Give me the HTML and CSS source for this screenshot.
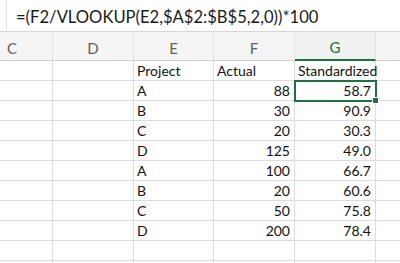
FILE: index.html
```html
<!DOCTYPE html>
<html>
<head>
<meta charset="utf-8">
<link rel="stylesheet" href="styles.css">
</head>
<body>
<div class="app">
  <div class="formula-bar">
    <div class="fx-sep"></div>
    <div class="formula">=(F2/VLOOKUP(E2,$A$2:$B$5,2,0))*100</div>
  </div>
  <div class="sheet">
    <div class="grid">
      <div class="hdr">C</div><div class="hdr">D</div><div class="hdr">E</div><div class="hdr">F</div><div class="hdr hdr-sel">G</div><div class="hdr"></div>

      <div class="cell"></div><div class="cell"></div><div class="cell">Project</div><div class="cell">Actual</div><div class="cell">Standardized</div><div class="cell"></div>

      <div class="cell"></div><div class="cell"></div><div class="cell">A</div><div class="cell num">88</div><div class="cell num active">58.7<span class="handle"></span></div><div class="cell"></div>

      <div class="cell"></div><div class="cell"></div><div class="cell">B</div><div class="cell num">30</div><div class="cell num">90.9</div><div class="cell"></div>

      <div class="cell"></div><div class="cell"></div><div class="cell">C</div><div class="cell num">20</div><div class="cell num">30.3</div><div class="cell"></div>

      <div class="cell"></div><div class="cell"></div><div class="cell">D</div><div class="cell num">125</div><div class="cell num">49.0</div><div class="cell"></div>

      <div class="cell"></div><div class="cell"></div><div class="cell">A</div><div class="cell num">100</div><div class="cell num">66.7</div><div class="cell"></div>

      <div class="cell"></div><div class="cell"></div><div class="cell">B</div><div class="cell num">20</div><div class="cell num">60.6</div><div class="cell"></div>

      <div class="cell"></div><div class="cell"></div><div class="cell">C</div><div class="cell num">50</div><div class="cell num">75.8</div><div class="cell"></div>

      <div class="cell"></div><div class="cell"></div><div class="cell">D</div><div class="cell num">200</div><div class="cell num">78.4</div><div class="cell"></div>

      <div class="cell"></div><div class="cell"></div><div class="cell"></div><div class="cell"></div><div class="cell"></div><div class="cell"></div>

      <div class="cell"></div><div class="cell"></div><div class="cell"></div><div class="cell"></div><div class="cell"></div><div class="cell"></div>
    </div>
  </div>
</div>
</body>
</html>
```

FILE: styles.css
```css
html, body {
  margin: 0;
  padding: 0;
  background: #ffffff;
}
body {
  width: 400px;
  height: 263px;
  overflow: hidden;
  font-family: Lato, "Open Sans", sans-serif;
  color: #111;
}
.app {
  display: flex;
  flex-direction: column;
  height: 263px;
  overflow: hidden;
}
.formula-bar {
  height: 31px;
  flex: none;
  border-bottom: 1px solid #d6d6d6;
  display: flex;
  align-items: center;
  background: #fff;
}
.fx-sep {
  width: 1px;
  align-self: stretch;
  background: #e2e2e2;
  margin-left: 6px;
}
.formula {
  margin-left: 9px;
  font-size: 16.6px;
  color: #1a1a1a;
  white-space: nowrap;
  padding-top: 3px;
}
.sheet {
  overflow: hidden;
  width: 400px;
  flex: 1;
}
.grid {
  display: grid;
  grid-template-columns: 81px 81px 80px 81px 81px 81px;
  grid-template-rows: 29px;
  grid-auto-rows: 20px;
  margin-left: -28px;
  width: max-content;
}
.hdr {
  height: 28px;
  background: #f5f5f5;
  border-right: 1px solid #e4e4e4;
  border-bottom: 1px solid #d0d0d0;
  color: #606060;
  font-size: 15px;
  display: flex;
  align-items: center;
  justify-content: center;
  padding-top: 3px;
  box-sizing: border-box;
  height: 29px;
}
.hdr-sel {
  color: #1e7145;
  border-bottom: 2px solid #1e7145;
  background: #f1f1f1;
}
.cell {
  border-right: 1px solid #dcdcdc;
  border-bottom: 1px solid #dcdcdc;
  font-size: 14px;
  line-height: 19px;
  padding: 0 3px 0 3px;
  display: flex;
  align-items: flex-end;
  white-space: nowrap;
  overflow: visible;
  position: relative;
}
.num {
  justify-content: flex-end;
  padding-right: 4px;
}
.active {
  outline: 2px solid #1e7145;
  outline-offset: -1px;
  z-index: 2;
}
.handle {
  position: absolute;
  right: -4px;
  bottom: -4px;
  width: 5px;
  height: 5px;
  background: #1e7145;
  border: 1px solid #fff;
}
```
